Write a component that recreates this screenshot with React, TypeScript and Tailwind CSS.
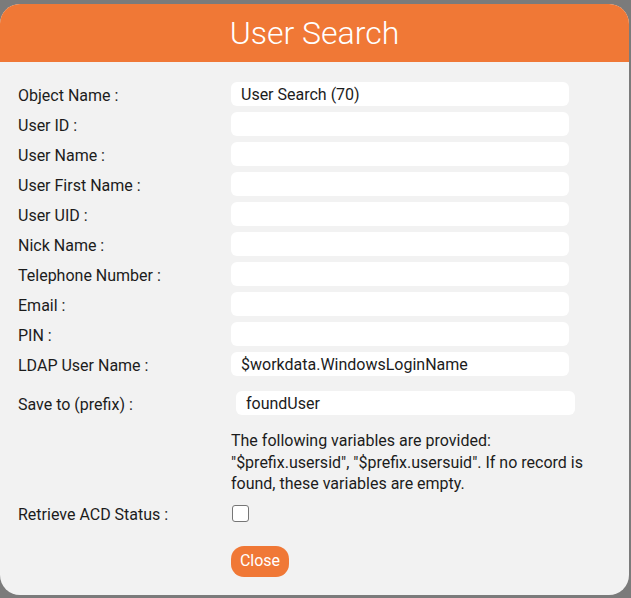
const fields: { label: string; value: string }[] = [
  { label: "Object Name :", value: "User Search (70)" },
  { label: "User ID :", value: "" },
  { label: "User Name :", value: "" },
  { label: "User First Name :", value: "" },
  { label: "User UID :", value: "" },
  { label: "Nick Name :", value: "" },
  { label: "Telephone Number :", value: "" },
  { label: "Email :", value: "" },
  { label: "PIN :", value: "" },
  { label: "LDAP User Name :", value: "$workdata.WindowsLoginName" },
];

export default function App() {
  return (
    <div
      className="w-[631px] h-[598px] bg-[#7b7b7b] pt-[4px] overflow-hidden"
      style={{ fontFamily: "Roboto, 'Liberation Sans', sans-serif" }}
    >
      <div className="w-[629px] h-[591px] rounded-[20px] bg-[#f2f2f2] overflow-hidden text-[16px] text-[#1c1c1c]">
        <div className="h-[58px] bg-[#f07836] flex items-center justify-center">
          <h1 className="text-[32px] font-light text-white leading-none">User Search</h1>
        </div>

        <div className="pt-[20px] pl-[18px]">
          <div className="flex flex-col gap-[6px]">
            {fields.map((f) => (
              <div key={f.label} className="flex items-center h-[24px]">
                <span className="w-[213px] pt-[4px]">{f.label}</span>
                <div className="w-[338px] h-[24px] rounded-[6px] bg-white pl-[10px] pt-[2px] flex items-center">
                  {f.value}
                </div>
              </div>
            ))}
          </div>

          <div className="flex items-center h-[24px] mt-[15px]">
            <span className="w-[218px] pt-[4px]">Save to (prefix) :</span>
            <div className="w-[339px] h-[24px] rounded-[6px] bg-white pl-[10px] pt-[2px] flex items-center">
              foundUser
            </div>
          </div>

          <p className="ml-[213px] mt-[15px] w-[362px] leading-[21.5px]">
            The following variables are provided: "$prefix.usersid", "$prefix.usersuid". If no record is found, these variables are empty.
          </p>

          <div className="flex items-center h-[24px] mt-[7px]">
            <span className="w-[214px] pt-[2px]">Retrieve ACD Status :</span>
            <div className="w-[17px] h-[17px] rounded-[3px] border-[1.5px] border-[#767676] bg-white" />
          </div>

          <button className="ml-[213px] mt-[20px] h-[31px] w-[58px] rounded-[13px] bg-[#f07836] text-white">
            Close
          </button>
        </div>
      </div>
    </div>
  );
}
